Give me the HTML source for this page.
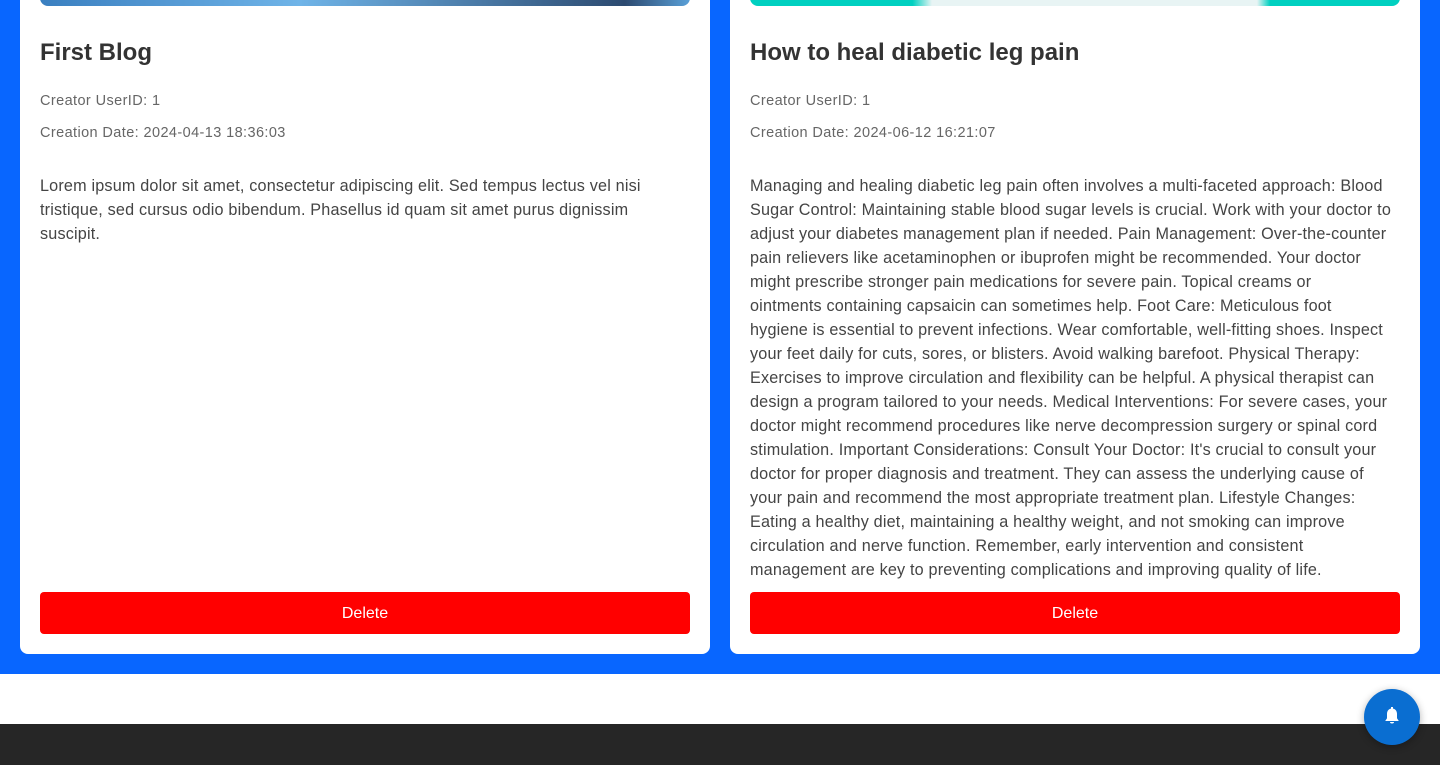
<!DOCTYPE html>
<html><head><style>
body{margin:0;width:1440px;height:765px;overflow:hidden;background:#fff;font-family:"Liberation Sans",sans-serif;position:relative}
.blue{position:absolute;left:0;top:0;width:1440px;height:674px;background:#0866ff}
.card{position:absolute;top:-20px;width:690px;height:674px;background:#fff;border-radius:8px}
.img{position:absolute;left:20px;top:0;width:650px;height:26px;border-radius:0 0 8px 8px}
h2{position:absolute;left:20px;top:59px;margin:0;font-size:24px;font-weight:700;color:#333;letter-spacing:0}
.meta{position:absolute;left:20px;font-size:14.5px;color:#666;letter-spacing:.4px}
.body{position:absolute;left:20px;top:194px;font-size:16.2px;line-height:24px;color:#444;white-space:nowrap;letter-spacing:.18px}
.del{position:absolute;left:20px;top:612px;width:650px;height:42px;background:#f00;border-radius:4px;color:#fff;font-size:16px;text-align:center;line-height:44px}
.foot{position:absolute;left:0;top:724px;width:1440px;height:41px;background:#262626}
.bell{position:absolute;left:1364px;top:689px;width:56px;height:56px;border-radius:50%;background:#0a6ed1;box-shadow:0 2px 8px rgba(0,0,0,.3)}
</style></head><body>
<div class="blue"></div>
<div class="card" style="left:20px">
<div class="img" style="background:linear-gradient(90deg,#3a7fc0,#6fb4e8 40%,#2c4a70 90%,#5aa0d8)"></div>
<h2>First Blog</h2>
<div class="meta" style="top:113px">Creator UserID: 1</div>
<div class="meta" style="top:145px">Creation Date: 2024-04-13 18:36:03</div>
<div class="body">Lorem ipsum dolor sit amet, consectetur adipiscing elit. Sed tempus lectus vel nisi<br>tristique, sed cursus odio bibendum. Phasellus id quam sit amet purus dignissim<br>suscipit.</div>
<div class="del">Delete</div>
</div>
<div class="card" style="left:730px">
<div class="img" style="background:linear-gradient(90deg,#00d0c0 25%,#e8f4f4 28%,#e8f4f4 78%,#00d0c0 80%)"></div>
<h2>How to heal diabetic leg pain</h2>
<div class="meta" style="top:113px">Creator UserID: 1</div>
<div class="meta" style="top:145px">Creation Date: 2024-06-12 16:21:07</div>
<div class="body">Managing and healing diabetic leg pain often involves a multi-faceted approach: Blood<br>Sugar Control: Maintaining stable blood sugar levels is crucial. Work with your doctor to<br>adjust your diabetes management plan if needed. Pain Management: Over-the-counter<br>pain relievers like acetaminophen or ibuprofen might be recommended. Your doctor<br>might prescribe stronger pain medications for severe pain. Topical creams or<br>ointments containing capsaicin can sometimes help. Foot Care: Meticulous foot<br>hygiene is essential to prevent infections. Wear comfortable, well-fitting shoes. Inspect<br>your feet daily for cuts, sores, or blisters. Avoid walking barefoot. Physical Therapy:<br>Exercises to improve circulation and flexibility can be helpful. A physical therapist can<br>design a program tailored to your needs. Medical Interventions: For severe cases, your<br>doctor might recommend procedures like nerve decompression surgery or spinal cord<br>stimulation. Important Considerations: Consult Your Doctor: It's crucial to consult your<br>doctor for proper diagnosis and treatment. They can assess the underlying cause of<br>your pain and recommend the most appropriate treatment plan. Lifestyle Changes:<br>Eating a healthy diet, maintaining a healthy weight, and not smoking can improve<br>circulation and nerve function. Remember, early intervention and consistent<br>management are key to preventing complications and improving quality of life.</div>
<div class="del">Delete</div>
</div>
<div class="foot"></div>
<div class="bell"><svg width="56" height="56" viewBox="0 0 56 56"><path d="M28 19.5c-3 0-5 2.3-5 5.3v4.5l-1.8 2.7h13.6L33 29.3v-4.5c0-3-2-5.3-5-5.3z" fill="#fff"/><rect x="27" y="18" width="2" height="2.5" fill="#fff"/><path d="M26 33h4a2 1.5 0 0 1-4 0z" fill="#fff"/></svg></div>
</body></html>
